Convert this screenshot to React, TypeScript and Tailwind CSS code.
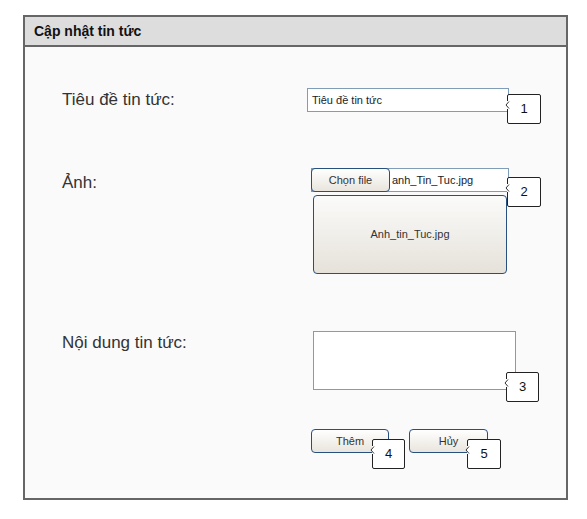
import type { ReactNode } from 'react'

function Callout({ n, className }: { n: number; className: string }) {
  return (
    <div
      className={`absolute flex h-[30px] items-center justify-center rounded-[2px] border border-[#222] bg-white text-[13px] text-[#111] ${className}`}
    >
      <svg className="absolute left-[-4px] top-[6px]" width="6" height="8" viewBox="0 0 6 8">
        <rect x="3" y="0" width="3" height="8" fill="white" />
        <polyline points="5,0.5 2,4 5,7.5" fill="none" stroke="#333" strokeWidth="1" />
      </svg>
      {n}
    </div>
  )
}

function Btn({ children, className }: { children: ReactNode; className: string }) {
  return (
    <div
      className={`relative flex h-[24px] items-center justify-center rounded-[4px] border border-[#27507f] bg-gradient-to-b from-white to-[#e9e5dd] text-[11px] text-[#333] ${className}`}
    >
      {children}
    </div>
  )
}

export default function App() {
  return (
    <div className="min-h-[519px] bg-white pl-[23px] pt-[15px]" style={{ fontFamily: '"Liberation Sans", Arial, sans-serif' }}>
      <div className="flex h-[485px] w-[545px] flex-col border-2 border-[#666] bg-[#fafafa]">
        <div className="flex h-[30px] items-center border-b-2 border-[#666] bg-[#dddddd] px-[9px] text-[14px] font-bold text-[#111]">
          Cập nhật tin tức
        </div>

        <div className="flex flex-col pl-[37px]">
          {/* tiêu đề */}
          <div className="mt-[41px] flex items-center">
            <div className="w-[245px] text-[17px] leading-[20px] text-[#333]">Tiêu đề tin tức:</div>
            <div className="relative flex h-[24px] w-[202px] items-center border border-[#7f9db9] bg-white px-[4px] text-[11px] text-[#222]">
              Tiêu đề tin tức
              <Callout n={1} className="left-[199px] top-[5px] w-[34px]" />
            </div>
          </div>

          {/* ảnh */}
          <div className="mt-[56px] flex items-start">
            <div className="w-[245px] pt-[5px] text-[17px] leading-[20px] text-[#333]">Ảnh:</div>
            <div className="flex flex-col">
              <div className="relative ml-[4px] flex h-[24px] w-[198px] items-center border border-[#7f9db9] bg-white text-[11px] text-[#222]">
                <Btn className="-ml-px -my-px h-[24px] w-[79px] shrink-0">Chọn file</Btn>
                <span className="pl-[2px]">anh_Tin_Tuc.jpg</span>
                <Callout n={2} className="left-[195px] top-[8px] w-[34px]" />
              </div>
              <div className="ml-[6px] mt-[3px] flex h-[79px] w-[194px] items-center justify-center rounded-[4px] border border-[#27507f] bg-gradient-to-b from-[#fbfbfa] to-[#e6e2da] text-[11px] text-[#333]">
                Anh_tin_Tuc.jpg
              </div>
            </div>
          </div>

          {/* nội dung */}
          <div className="mt-[57px] flex items-start">
            <div className="w-[245px] pt-[2px] text-[17px] leading-[20px] text-[#333]">Nội dung tin tức:</div>
            <div className="relative ml-[6px] h-[59px] w-[203px] border border-[#7f9db9] bg-white">
              <Callout n={3} className="left-[192px] top-[40px] w-[33px]" />
            </div>
          </div>

          {/* nút */}
          <div className="mt-[39px] flex items-start pl-[249px]">
            <Btn className="w-[78px]">
              Thêm
              <Callout n={4} className="left-[60px] top-[9px] w-[33px]" />
            </Btn>
            <Btn className="ml-[20px] w-[79px]">
              Hủy
              <Callout n={5} className="left-[57px] top-[9px] w-[34px]" />
            </Btn>
          </div>
        </div>
      </div>
    </div>
  )
}
